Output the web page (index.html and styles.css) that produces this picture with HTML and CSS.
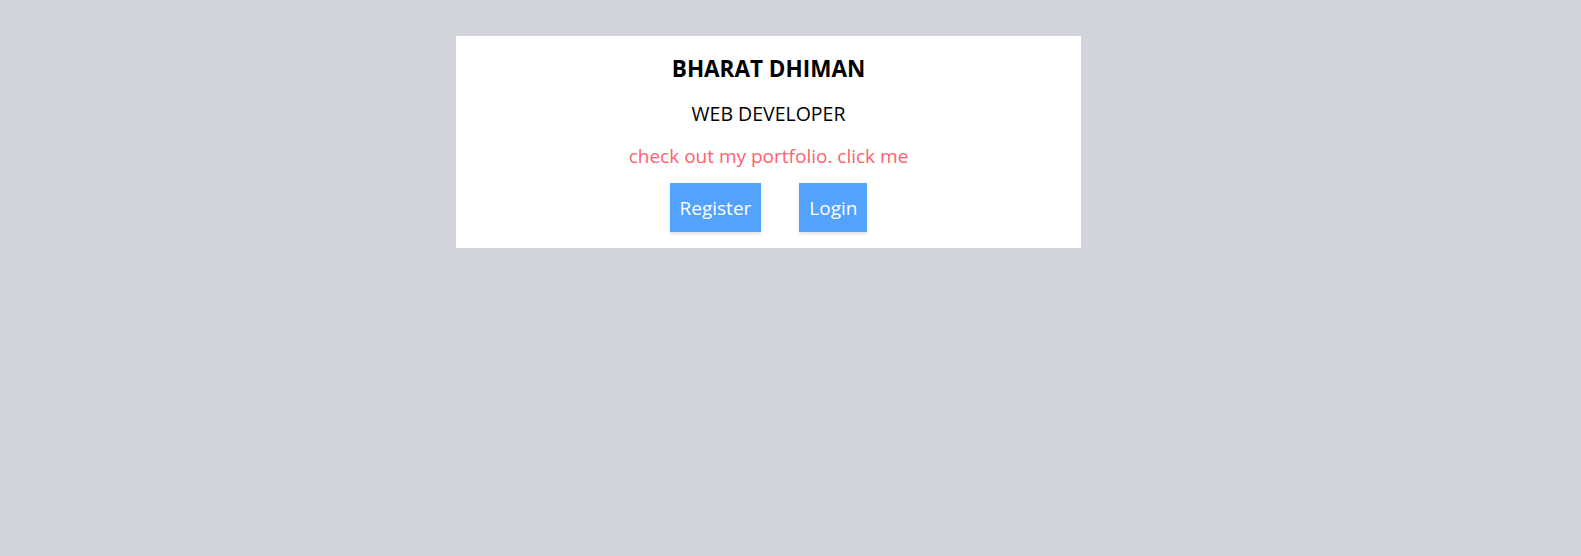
FILE: index.html
```html
<!DOCTYPE html>
<html>
<head>
<meta charset="utf-8">
<link rel="stylesheet" href="styles.css">
</head>
<body>
<div class="card">
  <h1 class="name">BHARAT DHIMAN</h1>
  <h2 class="role">WEB DEVELOPER</h2>
  <a class="link" href="#">check out my portfolio. click me</a>
  <div class="actions">
    <button class="btn">Register</button>
    <button class="btn">Login</button>
  </div>
</div>
</body>
</html>
```
FILE: styles.css
```css
html, body {
  margin: 0;
  padding: 0;
  background: #d1d5db;
}
body {
  font-family: "Open Sans", "Noto Sans", sans-serif;
  padding-top: 36px;
  min-height: 100vh;
  box-sizing: border-box;
}
.card {
  margin-left: 456px;
  width: 625px;
  height: 212px;
  box-sizing: border-box;
  background: #ffffff;
  display: flex;
  flex-direction: column;
  align-items: center;
  padding-top: 18px;
}
.name {
  margin: 0;
  font-size: 22.5px;
  font-weight: 700;
  line-height: 30px;
  color: #000;
}
.role {
  margin: 18px 0 0;
  font-size: 19.5px;
  font-weight: 500;
  line-height: 24px;
  color: #000;
}
.link {
  margin-top: 17px;
  font-size: 19px;
  line-height: 26px;
  color: #fe5f6f;
  text-decoration: none;
}
.actions {
  display: flex;
  gap: 38px;
  margin-top: 14px;
}
.btn {
  font-family: inherit;
  font-size: 19px;
  color: #fff;
  background: #53a2fe;
  border: none;
  height: 49px;
  padding: 0 10px;
  box-shadow: 0 2px 3px rgba(0,0,0,0.12);
}
```
